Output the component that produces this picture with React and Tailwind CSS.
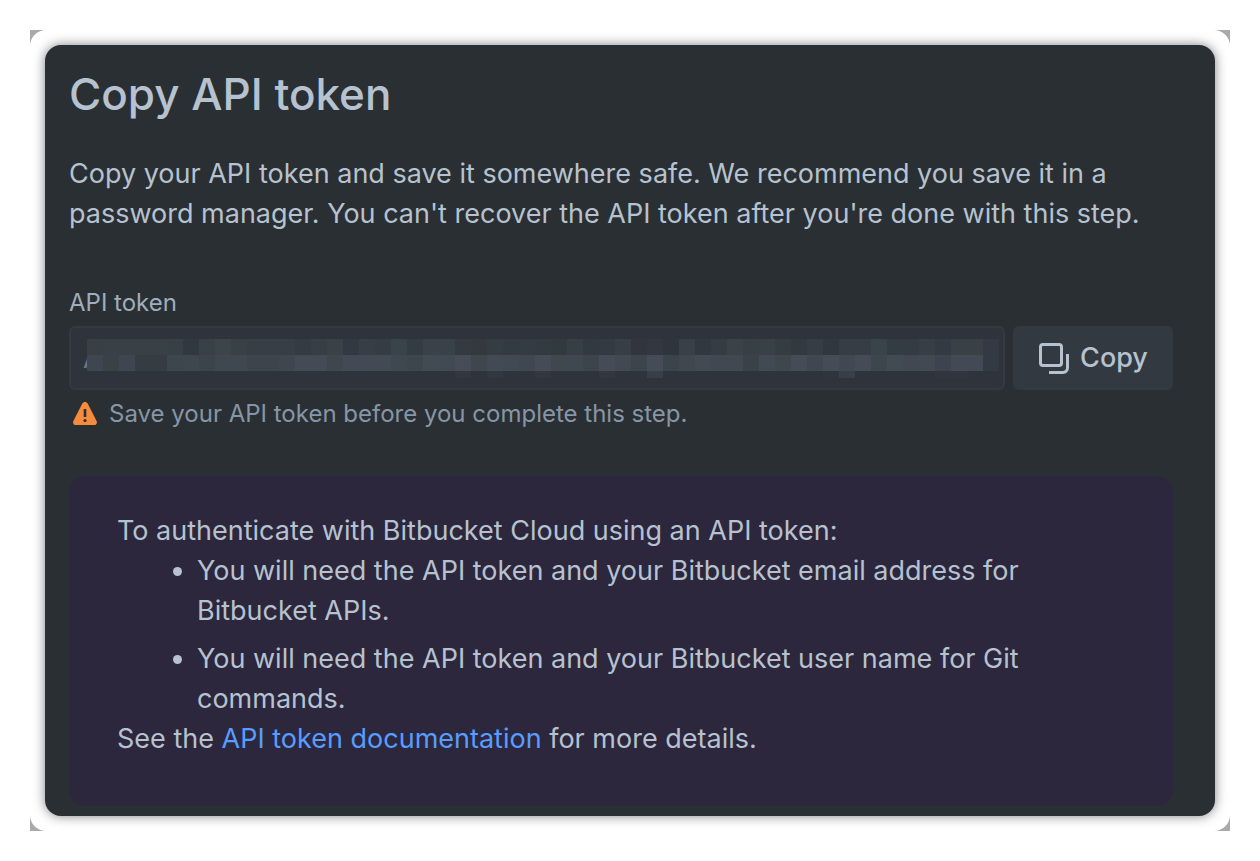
// src/App.jsx
import { useId } from "react";

const CELL = 16;

// Shades of the redacted token, one colour per cell.
const MOSAIC_TOP =
  "384046 394047 394046 394046 394046 374046 303840 3a4047 3c454a 394046 373e45 373e45 373e45 343b43 383e46 3a4147 333942 383e46 353c44 39434a 333b43 394249 394249 333a41 33393f 353d44 333a41 343c43 333b42 32393f 373f46 323940 333a41 373e45 33353e 33373f 2e353d 3a4047 31383f 353c43 3b4248 384046 384147 353d43 333941 363d44 31373f 363d44 363d44 38434a 333b43 353b44 383e46 343a43 394046 394046 343a43".split(
    " ",
  );
const MOSAIC_MIDDLE =
  "3e4751 3a4248 3e4751 343c44 353c44 3d464d 3e474e 3b444b 3f4751 3f4751 3c454b 3c454b 3e4750 444b56 444b56 3f474e 434a55 434a55 424a54 3f4851 3d464c 424a54 414952 464c58 3e474e 424a55 414a54 3f4850 464c57 40484f 3f4851 3c454b 464c57 414953 3c454b 464c57 3c444b 3f484f 434a54 414852 414852 3a4249 414952 3e474e 454b57 3f4751 454b57 414853 454b57 3d454d 424a53 414852 414953 3d434f 434a55 434a55 343a43".split(
    " ",
  );
const MOSAIC_BOTTOM = [
  [23, "343740"],
  [25, "343740"],
  [28, "343740"],
  [32, "343740"],
  [35, "3a3e49"],
  [46, "30343c"],
  [47, "3a3e49"],
  [53, "32353e"],
  [54, "32353e"],
];

function TokenMosaic() {
  return (
    <svg
      className="pointer-events-none absolute left-[18px] top-[13px]"
      width={MOSAIC_TOP.length * CELL}
      height="39"
      shapeRendering="crispEdges"
      aria-hidden="true"
    >
      {MOSAIC_TOP.map((c, i) => (
        <rect key={i} x={i * CELL} y="0" width="16" height="16" fill={`#${c}`} />
      ))}
      {MOSAIC_MIDDLE.map((c, i) => (
        <rect key={i} x={i * CELL} y="16" width="16" height="16" fill={`#${c}`} />
      ))}
      {MOSAIC_BOTTOM.map(([i, c]) => (
        <rect key={i} x={i * CELL} y="32" width="16" height="7" fill={`#${c}`} />
      ))}
    </svg>
  );
}

function CopyIcon() {
  return (
    <svg width="32" height="32" viewBox="0 0 32 32" fill="none" aria-hidden="true">
      <rect x="2.5" y="2.5" width="21" height="21" rx="2.5" stroke="currentColor" strokeWidth="3" />
      <path d="M11 30.500h14a4.500 4.500 0 0 0 4.500-4.500V12" stroke="currentColor" strokeWidth="3" />
    </svg>
  );
}

function WarningIcon() {
  return (
    <svg className="shrink-0" width="32" height="32" viewBox="0 0 32 32" aria-hidden="true">
      <path
        d="M13.2 5.800c1.200-2.300 4.400-2.300 5.600 0l8.800 17.200c.9 1.800-.2 4-2.200 4H6.600c-2 0-3.100-2.200-2.200-4z"
        fill="#f68b3e"
      />
      <path d="M14.700 11h2.600v8h-2.600z" fill="#282e33" />
      <circle cx="16" cy="22.500" r="1.600" fill="#282e33" />
    </svg>
  );
}

export default function App() {
  const tokenId = useId();

  return (
    <div className="min-h-screen bg-white p-[30px] font-['Inter','Liberation_Sans',sans-serif]">
      <div className="bg-[#a9a9a9]">
        <main className="rounded-2xl bg-white p-[15px]">
          <section className="rounded-2xl bg-[#2a2f33] pt-[19px] pr-[42px] pb-[10px] pl-6 text-[#b6c2cf] shadow-[0_0_12px_rgba(0,0,0,0.5)]">
            <h1 className="text-[44px] leading-[60px] font-medium">Copy API token</h1>

            <p className="mt-[30px] text-[27px] leading-10">
              Copy your API token and save it somewhere safe. We recommend you save it in a
              password manager. You can't recover the API token after you're done with this
              step.
            </p>

            <label
              htmlFor={tokenId}
              className="mt-[53px] block text-[24px] leading-8 text-[#9fadbc]"
            >
              API token
            </label>
            <div className="mt-[7px] flex gap-2">
              <div className="relative flex-1">
                <input
                  id={tokenId}
                  readOnly
                  defaultValue="A"
                  className="block h-16 w-full rounded-md border-2 border-[#353941] bg-[#2f333c] px-3 text-[27px] text-[#6c7884] outline-none"
                />
                <TokenMosaic />
              </div>
              <button
                type="button"
                className="flex h-16 w-40 items-center justify-center gap-[10px] rounded-md bg-[#333940] text-[27px] font-medium"
              >
                <CopyIcon />
                Copy
              </button>
            </div>
            <p className="mt-2 flex items-center gap-2 text-[24px] leading-8 text-[#8696a7]">
              <WarningIcon />
              Save your API token before you complete this step.
            </p>

            <div className="mt-[46px] rounded-2xl bg-[#2c273d] px-12 pt-[35px] pb-[47px] text-[27px] leading-10">
              <p>To authenticate with Bitbucket Cloud using an API token:</p>
              <ul className="list-disc space-y-2 pr-12 pl-20">
                <li>
                  You will need the API token and your Bitbucket email address for Bitbucket
                  APIs.
                </li>
                <li>
                  You will need the API token and your Bitbucket user name for Git commands.
                </li>
              </ul>
              <p>
                See the{" "}
                <a href="#docs" className="text-[#579dff]">
                  API token documentation
                </a>{" "}
                for more details.
              </p>
            </div>
          </section>
        </main>
      </div>
    </div>
  );
}
